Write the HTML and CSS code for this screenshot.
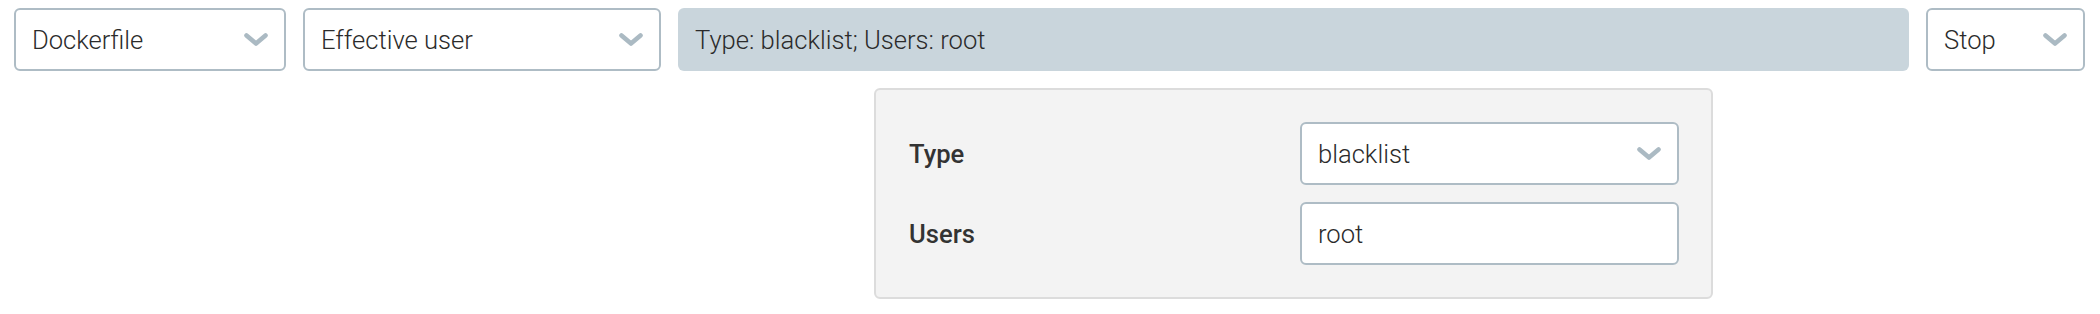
FILE: index.html
```html
<!DOCTYPE html>
<html lang="en">
<head>
    <meta charset="UTF-8">
    <title>Rule editor</title>
    <link rel="stylesheet" href="styles.css">
</head>
<body>
    <!-- Rule row -->
    <div class="rule-row">
        <div class="select select-source">
            <span>Dockerfile</span>
            <svg class="chevron" viewBox="0 0 24 13"><polyline points="2.5,2.5 12,10.5 21.5,2.5"/></svg>
        </div>

        <div class="select select-rule">
            <span>Effective user</span>
            <svg class="chevron" viewBox="0 0 24 13"><polyline points="2.5,2.5 12,10.5 21.5,2.5"/></svg>
        </div>

        <div class="summary-wrap">
            <div class="summary">Type: blacklist; Users: root</div>

            <!-- Options panel -->
            <div class="options">
                <div class="field">
                    <div class="field-label">Type</div>
                    <div class="select">
                        <span>blacklist</span>
                        <svg class="chevron" viewBox="0 0 24 13"><polyline points="2.5,2.5 12,10.5 21.5,2.5"/></svg>
                    </div>
                </div>
                <div class="field">
                    <div class="field-label">Users</div>
                    <div class="input">root</div>
                </div>
            </div>
        </div>

        <div class="select select-action">
            <span>Stop</span>
            <svg class="chevron" viewBox="0 0 24 13"><polyline points="2.5,2.5 12,10.5 21.5,2.5"/></svg>
        </div>
    </div>
</body>
</html>
```

FILE: styles.css
```css
/* General */
body {
    margin: 0;
    padding: 0;
    font-family: Roboto, 'Liberation Sans', sans-serif;
    font-size: 25.6px;
    font-weight: 300;
    color: #2b2b2b;
    background: #fff;
}

/* Rule row */
.rule-row {
    display: flex;
    align-items: flex-start;
    gap: 17px;
    padding: 8px 15px 0 14px;
}

.select,
.input {
    box-sizing: border-box;
    height: 63px;
    display: flex;
    align-items: center;
    justify-content: space-between;
    padding: 0 16px;
    border: 2px solid #aebcc5;
    border-radius: 6px;
    background: #fff;
    white-space: nowrap;
}

.select-source {
    width: 272px;
}

.select-rule {
    width: 358px;
}

.select-action {
    width: 159px;
}

.chevron {
    width: 24px;
    height: 13px;
    flex-shrink: 0;
}

.chevron polyline {
    fill: none;
    stroke: #abbac3;
    stroke-width: 4.6;
    stroke-linecap: round;
    stroke-linejoin: round;
}

/* Summary + options panel */
.summary-wrap {
    flex: 1;
    display: flex;
    flex-direction: column;
    align-items: center;
    gap: 17px;
}

.summary {
    box-sizing: border-box;
    align-self: stretch;
    height: 63px;
    display: flex;
    align-items: center;
    padding: 0 17px;
    background: #c9d5dc;
    border-radius: 6px;
}

.options {
    box-sizing: border-box;
    width: 839px;
    padding: 32px;
    background: #f3f3f3;
    border: 2px solid #dcdcdc;
    border-radius: 6px;
    display: flex;
    flex-direction: column;
    gap: 17px;
}

.field {
    display: grid;
    grid-template-columns: 1fr 379px;
    align-items: center;
}

.field-label {
    font-weight: 500;
    color: #333;
    padding-left: 1px;
}
```
